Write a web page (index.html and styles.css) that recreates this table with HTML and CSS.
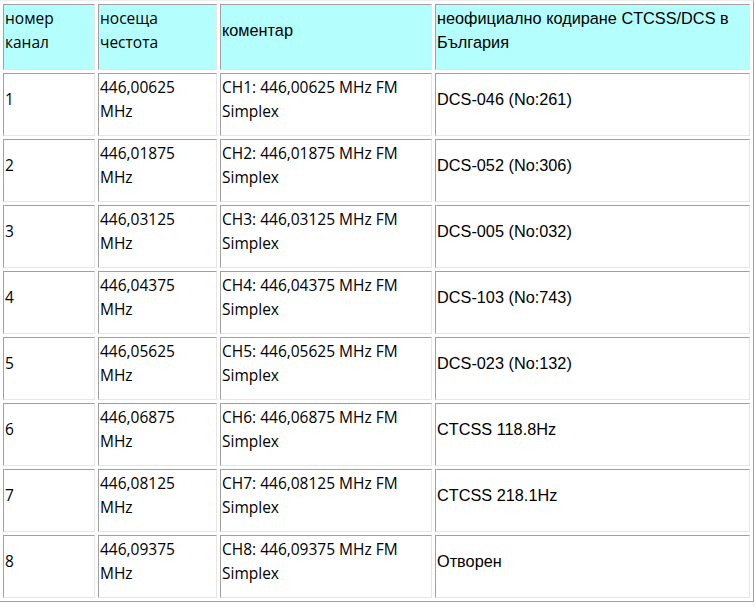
FILE: index.html
```html
<!DOCTYPE html>
<html>
<head>
<meta charset="utf-8">
<link rel="stylesheet" href="styles.css">
</head>
<body>
<table class="channels">
<colgroup>
<col class="c1"><col class="c2"><col class="c3"><col class="c4">
</colgroup>
<tr class="head">
<td class="seg">номер<br>канал</td>
<td class="seg">носеща<br>честота</td>
<td class="ar">коментар</td>
<td class="ar">неофициално кодиране CTCSS/DCS в<br>България</td>
</tr>
<tr><td class="seg">1</td><td class="seg">446,00625<br>MHz</td><td class="seg">CH1: 446,00625 MHz FM<br>Simplex</td><td class="ar">DCS-046 (No:261)</td></tr>
<tr><td class="seg">2</td><td class="seg">446,01875<br>MHz</td><td class="seg">CH2: 446,01875 MHz FM<br>Simplex</td><td class="ar">DCS-052 (No:306)</td></tr>
<tr><td class="seg">3</td><td class="seg">446,03125<br>MHz</td><td class="seg">CH3: 446,03125 MHz FM<br>Simplex</td><td class="ar">DCS-005 (No:032)</td></tr>
<tr><td class="seg">4</td><td class="seg">446,04375<br>MHz</td><td class="seg">CH4: 446,04375 MHz FM<br>Simplex</td><td class="ar">DCS-103 (No:743)</td></tr>
<tr><td class="seg">5</td><td class="seg">446,05625<br>MHz</td><td class="seg">CH5: 446,05625 MHz FM<br>Simplex</td><td class="ar">DCS-023 (No:132)</td></tr>
<tr><td class="seg">6</td><td class="seg">446,06875<br>MHz</td><td class="seg">CH6: 446,06875 MHz FM<br>Simplex</td><td class="ar">CTCSS 118.8Hz</td></tr>
<tr><td class="seg">7</td><td class="seg">446,08125<br>MHz</td><td class="seg">CH7: 446,08125 MHz FM<br>Simplex</td><td class="ar">CTCSS 218.1Hz</td></tr>
<tr><td class="seg">8</td><td class="seg">446,09375<br>MHz</td><td class="seg">CH8: 446,09375 MHz FM<br>Simplex</td><td class="ar">Отворен</td></tr>
</table>
</body>
</html>
```
FILE: styles.css
```css
html, body {
  margin: 0;
  padding: 0;
  background: #ffffff;
}
.channels {
  margin-left: -1px;
  border: 1px solid;
  border-color: #eeeeee #a0a0a0 #a0a0a0 #eeeeee;
  border-spacing: 3px;
  width: 755px;
  table-layout: fixed;
  color: #000000;
}
.c1 { width: 92px; }
.c2 { width: 119px; }
.c3 { width: 212px; }
.c4 { width: auto; }
.channels td {
  border: 1px solid;
  border-color: #a0a0a0 #e6e6e6 #e6e6e6 #a0a0a0;
  padding: 1px 1px 12px 1px;
  vertical-align: middle;
  line-height: 24px;
  font-size: 16px;
  height: 36px;
}
.channels .head td {
  background: #b4fefe;
  padding-bottom: 15px;
}
.channels .seg {
  font-family: "Open Sans", "Noto Sans", sans-serif;
  font-size: 15.5px;
}
.channels .ar {
  font-family: "Liberation Sans", Arial, sans-serif;
  font-size: 16.3px;
}
```
